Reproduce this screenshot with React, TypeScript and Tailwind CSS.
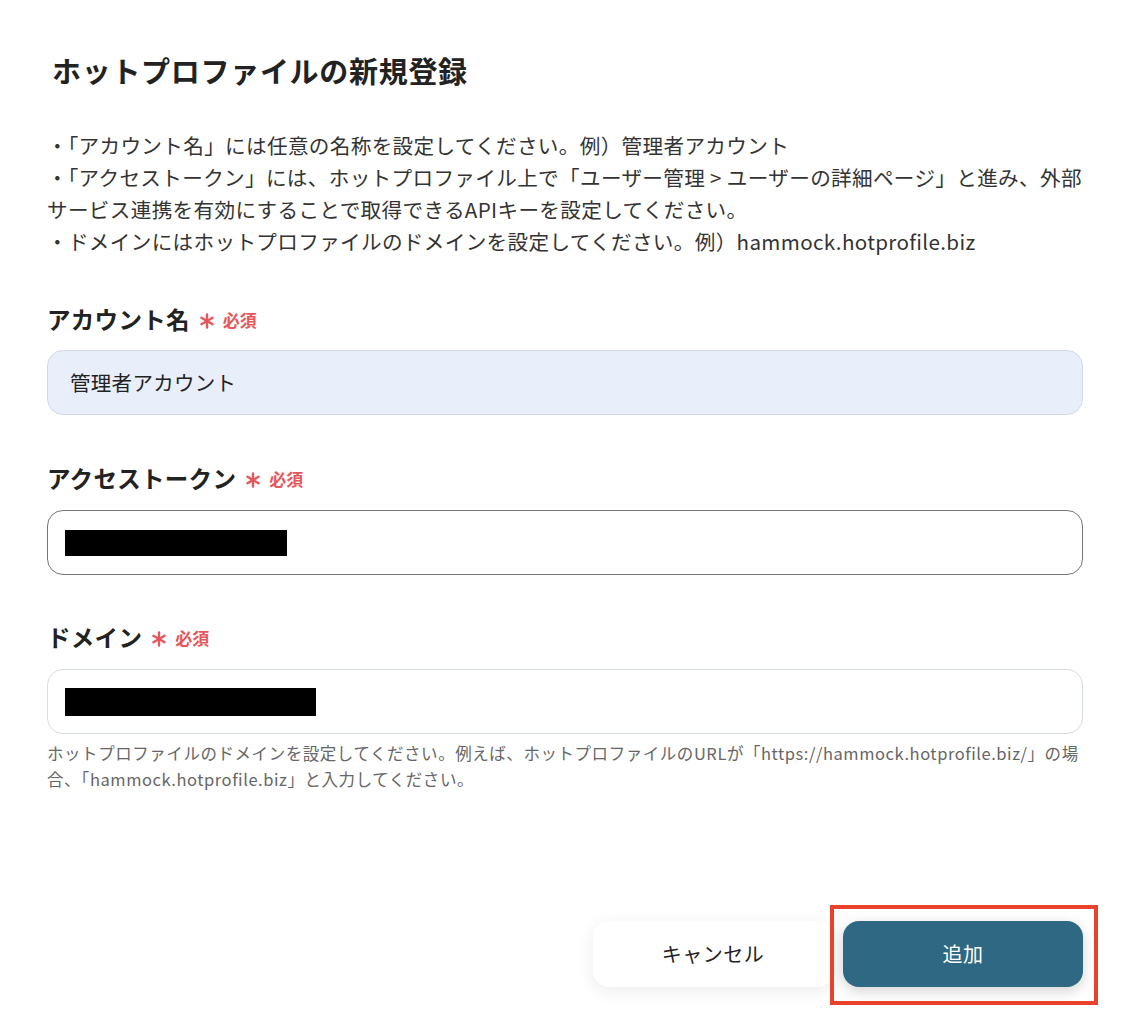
const FONT = '"Noto Sans CJK JP", "Noto Sans", sans-serif';

function Required() {
  return (
    <span className="ml-[9px] inline-flex items-center gap-[8px] text-[#e5575b]">
      <svg width="16" height="16" viewBox="0 0 16 16" className="mt-[2px]">
        <g stroke="#e5575b" strokeWidth="2.4" strokeLinecap="round">
          <line x1="8" y1="1.5" x2="8" y2="14.5" />
          <line x1="2.4" y1="4.75" x2="13.6" y2="11.25" />
          <line x1="2.4" y1="11.25" x2="13.6" y2="4.75" />
        </g>
      </svg>
      <span className="text-[17px] font-bold">必須</span>
    </span>
  );
}

function Label({ text, className }: { text: string; className?: string }) {
  return (
    <div className={`flex h-[32px] items-center ${className ?? ""}`}>
      <span className="text-[23.5px] font-bold tracking-[0.3px] text-[#222]">{text}</span>
      <Required />
    </div>
  );
}

export default function App() {
  return (
    <div className="min-h-[1028px] w-[1130px] bg-white px-[47px] pt-[50px]" style={{ fontFamily: FONT }}>
      <h1 className="pl-[5px] text-[29px] font-bold leading-[40px] tracking-[0.7px] text-[#222]">
        ホットプロファイルの新規登録
      </h1>

      <div className="-mr-[8px] mt-[39px] text-[20.6px] leading-[32px] tracking-[0.34px] text-[#333]">
        <p>・「アカウント名」には任意の名称を設定してください。例）管理者アカウント</p>
        <p>
          ・「アクセストークン」には、ホットプロファイル上で「ユーザー管理 &gt; ユーザーの詳細ページ」と進み、外部サービス連携を有効にすることで取得できるAPIキーを設定してください。
        </p>
        <p>・ドメインにはホットプロファイルのドメインを設定してください。例）hammock.hotprofile.biz</p>
      </div>

      <Label text="アカウント名" className="mt-[47px]" />
      <div className="mt-[14px] flex h-[65px] items-center rounded-[16px] border border-[#d3d9e2] bg-[#e8effb] px-[22px] text-[20.5px] tracking-[0.3px] text-[#222]">
        管理者アカウント
      </div>

      <Label text="アクセストークン" className="mt-[48px]" />
      <div className="mt-[15px] flex h-[65px] items-center rounded-[16px] border border-[#767676] bg-white px-[17px]">
        <div className="h-[26px] w-[222px] bg-black" />
      </div>

      <Label text="ドメイン" className="mt-[47px]" />
      <div className="mt-[15px] flex h-[65px] items-center rounded-[16px] border border-[#d6dce3] bg-white px-[17px]">
        <div className="h-[28px] w-[251px] bg-black" />
      </div>
      <p className="mt-[6px] text-[16.5px] leading-[26px] tracking-[0.55px] text-[#666]">
        ホットプロファイルのドメインを設定してください。例えば、ホットプロファイルのURLが「https://hammock.hotprofile.biz/」の場合、「hammock.hotprofile.biz」と入力してください。
      </p>

      <div className="mt-[129px] flex justify-end gap-[10px]">
        <button className="h-[66px] w-[240px] rounded-[16px] bg-white text-[20px] tracking-[0.5px] text-[#222] shadow-[0_4px_18px_rgba(0,0,0,0.08)]">
          キャンセル
        </button>
        <div className="relative">
          <button className="h-[66px] w-[240px] rounded-[16px] bg-[#2f6882] text-[20px] tracking-[0.5px] text-white shadow-[0_4px_14px_rgba(0,0,0,0.18)]">
            追加
          </button>
          <span className="pointer-events-none absolute -top-[16px] -right-[15px] -bottom-[18px] -left-[13px] border-4 border-[#e8412c]" />
        </div>
      </div>
    </div>
  );
}
